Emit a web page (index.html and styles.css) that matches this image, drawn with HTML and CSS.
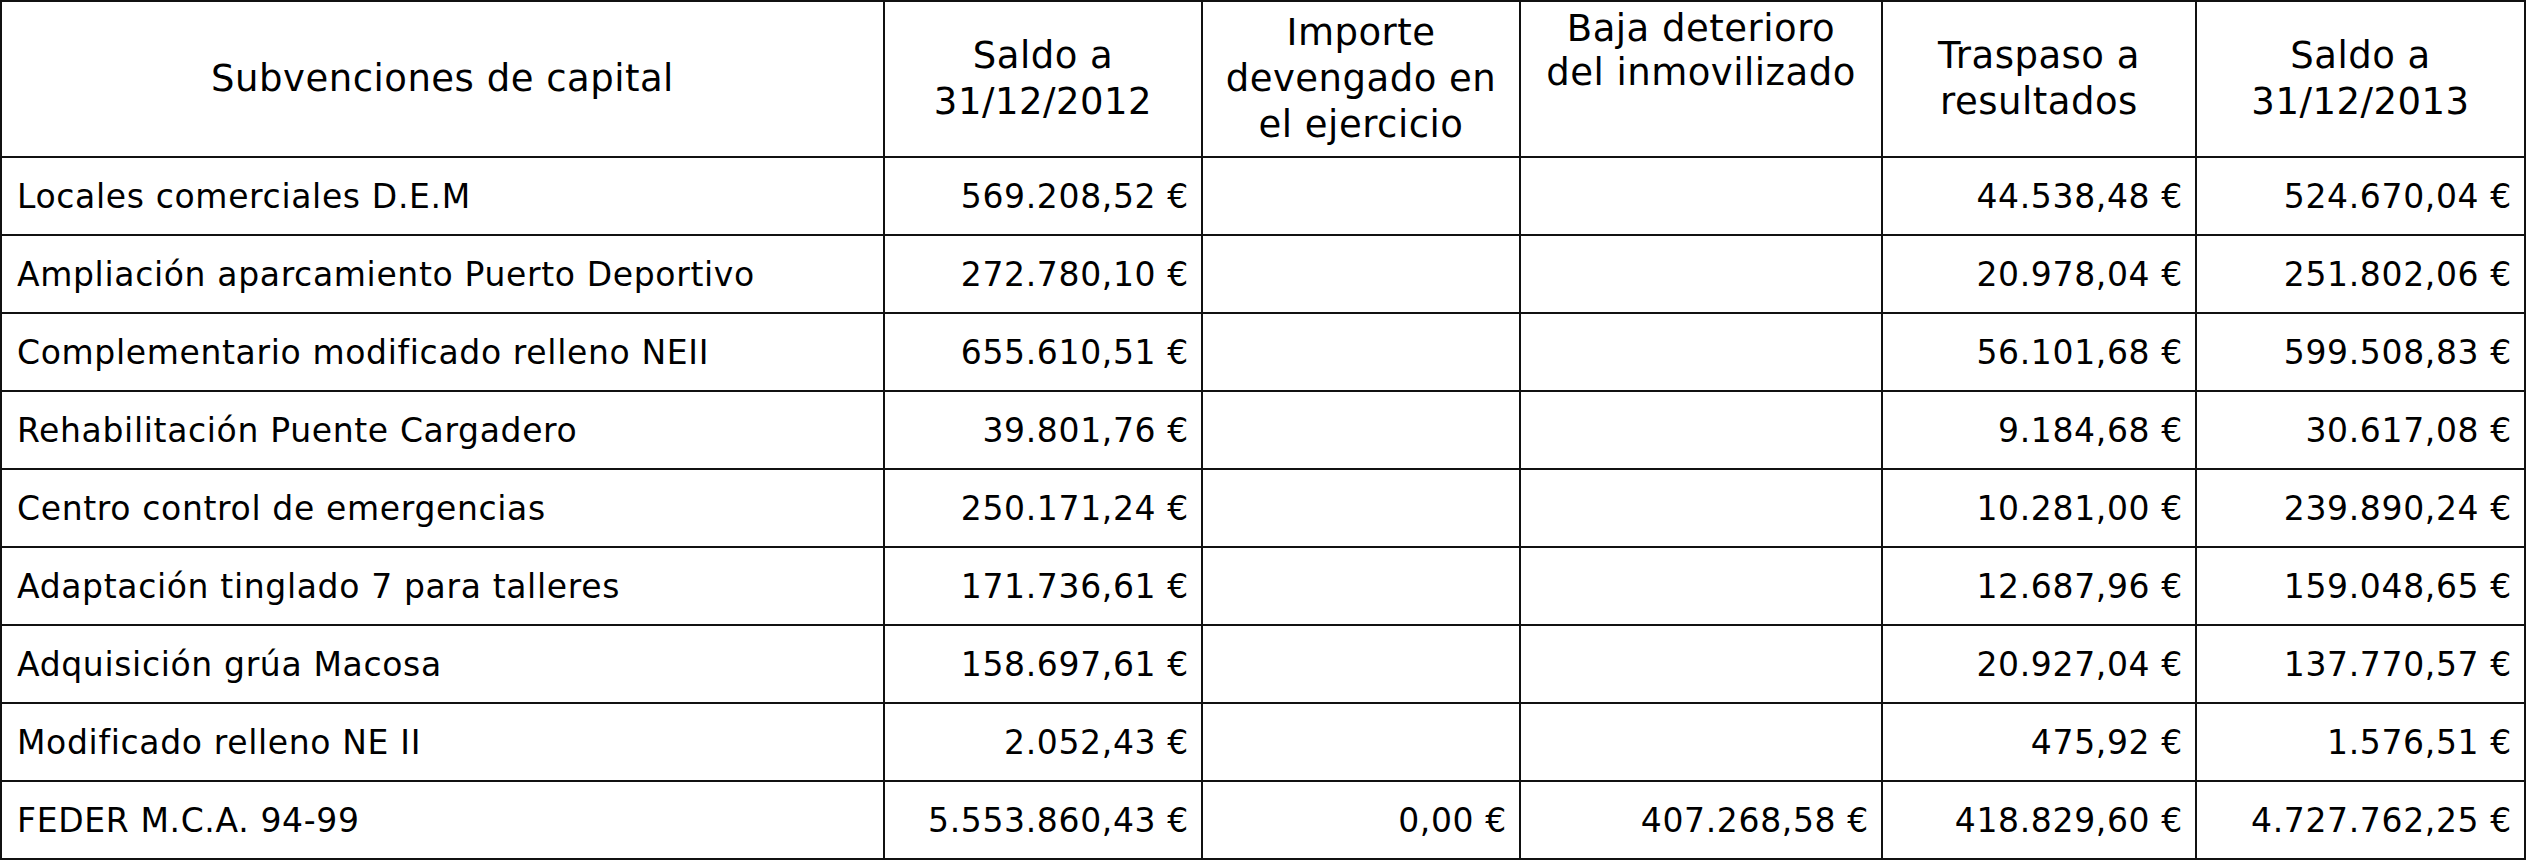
FILE: index.html
```html
<!DOCTYPE html>
<html lang="es">
<head>
<meta charset="utf-8">
<title>Subvenciones de capital</title>
<link rel="stylesheet" href="styles.css">
</head>
<body>
<table class="grid">
  <colgroup>
    <col class="c1"><col class="c2"><col class="c3"><col class="c4"><col class="c5"><col class="c6">
  </colgroup>
  <thead>
    <tr class="head">
      <th>Subvenciones de capital</th>
      <th>Saldo a<br>31/12/2012</th>
      <th>Importe<br>devengado en<br>el ejercicio</th>
      <th class="top">Baja deterioro<br>del inmovilizado</th>
      <th>Traspaso a<br>resultados</th>
      <th>Saldo a<br>31/12/2013</th>
    </tr>
  </thead>
  <tbody>
    <tr><td class="name">Locales comerciales D.E.M</td><td>569.208,52 €</td><td></td><td></td><td>44.538,48 €</td><td>524.670,04 €</td></tr>
    <tr><td class="name">Ampliación aparcamiento Puerto Deportivo</td><td>272.780,10 €</td><td></td><td></td><td>20.978,04 €</td><td>251.802,06 €</td></tr>
    <tr><td class="name">Complementario modificado relleno NEII</td><td>655.610,51 €</td><td></td><td></td><td>56.101,68 €</td><td>599.508,83 €</td></tr>
    <tr><td class="name">Rehabilitación Puente Cargadero</td><td>39.801,76 €</td><td></td><td></td><td>9.184,68 €</td><td>30.617,08 €</td></tr>
    <tr><td class="name">Centro control de emergencias</td><td>250.171,24 €</td><td></td><td></td><td>10.281,00 €</td><td>239.890,24 €</td></tr>
    <tr><td class="name">Adaptación tinglado 7 para talleres</td><td>171.736,61 €</td><td></td><td></td><td>12.687,96 €</td><td>159.048,65 €</td></tr>
    <tr><td class="name">Adquisición grúa Macosa</td><td>158.697,61 €</td><td></td><td></td><td>20.927,04 €</td><td>137.770,57 €</td></tr>
    <tr><td class="name">Modificado relleno NE II</td><td>2.052,43 €</td><td></td><td></td><td>475,92 €</td><td>1.576,51 €</td></tr>
    <tr><td class="name">FEDER M.C.A. 94-99</td><td>5.553.860,43 €</td><td>0,00 €</td><td>407.268,58 €</td><td>418.829,60 €</td><td>4.727.762,25 €</td></tr>
  </tbody>
</table>
</body>
</html>
```
FILE: styles.css
```css
html, body {
  margin: 0;
  padding: 0;
  background: #ffffff;
}
.grid {
  border-collapse: collapse;
  table-layout: fixed;
  width: 2526px;
  font-family: "DejaVu Sans", Verdana, sans-serif;
  color: #000;
}
.c1 { width: 883px; }
.c2 { width: 318px; }
.c3 { width: 318px; }
.c4 { width: 362px; }
.c5 { width: 314px; }
.c6 { width: 329px; }
.grid th, .grid td {
  border: 2px solid #111;
  padding: 0;
}
.head {
  height: 156px;
}
.grid th {
  font-weight: normal;
  font-size: 37px;
  letter-spacing: 0.5px;
  line-height: 46px;
  text-align: center;
  vertical-align: middle;
}
.grid th.top {
  vertical-align: top;
  line-height: 44px;
  padding-top: 5px;
}
.grid tbody tr {
  height: 78px;
}
.grid td {
  font-size: 33px;
  letter-spacing: 0.65px;
  text-align: right;
  vertical-align: middle;
  padding-right: 12px;
  white-space: nowrap;
}
.grid td.name {
  text-align: left;
  padding-left: 15px;
  padding-right: 0;
}
```
